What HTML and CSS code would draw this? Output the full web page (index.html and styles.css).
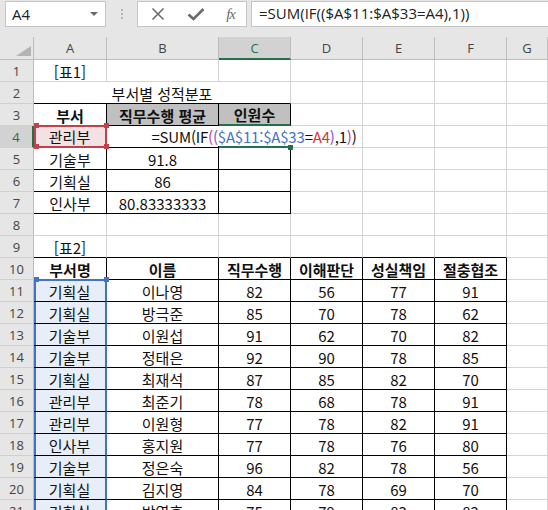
FILE: index.html
```html
<!DOCTYPE html>
<html lang="ko">
<head>
    <meta charset="UTF-8">
    <title>성적분포</title>
    <link rel="stylesheet" href="styles.css">
</head>
<body>

    <!-- 수식 입력줄 -->
    <div class="bar">
        <div class="namebox">
            <span>A4</span>
            <span class="caret"></span>
        </div>
        <div class="grip"><i></i><i></i><i></i></div>
        <div class="fxbox">
            <svg width="14" height="14" viewBox="0 0 14 14"><path d="M1.5 1.5 L12.5 12.5 M12.5 1.5 L1.5 12.5" stroke="#6b6b6b" stroke-width="1.6" fill="none"/></svg>
            <svg width="18" height="14" viewBox="0 0 18 14"><path d="M1.5 7.5 L6.5 12 L16.5 2" stroke="#6b6b6b" stroke-width="2.6" fill="none"/></svg>
            <span class="fx">fx</span>
        </div>
        <div class="formula">=SUM(IF(($A$11:$A$33=A4),1))</div>
    </div>

    <!-- 시트 -->
    <div class="sheet">
        <div class="h corner"><span class="tri"></span></div>
        <div class="h">A</div>
        <div class="h">B</div>
        <div class="h on-col">C</div>
        <div class="h">D</div>
        <div class="h">E</div>
        <div class="h">F</div>
        <div class="h">G</div>

        <div class="r">1</div>
        <div class="c">[표1]</div><div class="c"></div><div class="c"></div><div class="c"></div><div class="c"></div><div class="c"></div><div class="c"></div>

        <div class="r">2</div>
        <div class="c span3 bb">부서별 성적분포</div><div class="c"></div><div class="c"></div><div class="c"></div><div class="c"></div>

        <div class="r">3</div>
        <div class="c bk b red-b">부서</div><div class="c bk b gray">직무수행 평균</div><div class="c bk b gray green-b">인원수</div><div class="c"></div><div class="c"></div><div class="c"></div><div class="c"></div>

        <div class="r on-row">4</div>
        <div class="c bk ref-red">관리부<span class="hd tl"></span><span class="hd tr"></span><span class="hd bl"></span><span class="hd br"></span></div>
        <div class="c bk"></div>
        <div class="c bk active">
            <div class="edit">=SUM(IF<span class="p1">(</span><span class="p2">(</span><span class="blue">$A$11:$A$33</span>=<span class="red">A4</span><span class="p2">)</span>,1<span class="p1">)</span>)</div>
            <span class="hd act"></span>
        </div>
        <div class="c"></div><div class="c"></div><div class="c"></div><div class="c"></div>

        <div class="r">5</div>
        <div class="c bk">기술부</div><div class="c bk">91.8</div><div class="c bk"></div><div class="c"></div><div class="c"></div><div class="c"></div><div class="c"></div>

        <div class="r">6</div>
        <div class="c bk">기획실</div><div class="c bk">86</div><div class="c bk"></div><div class="c"></div><div class="c"></div><div class="c"></div><div class="c"></div>

        <div class="r">7</div>
        <div class="c bk">인사부</div><div class="c bk">80.83333333</div><div class="c bk"></div><div class="c"></div><div class="c"></div><div class="c"></div><div class="c"></div>

        <div class="r">8</div>
        <div class="c"></div><div class="c"></div><div class="c"></div><div class="c"></div><div class="c"></div><div class="c"></div><div class="c"></div>

        <div class="r">9</div>
        <div class="c bb">[표2]</div><div class="c bb"></div><div class="c bb"></div><div class="c bb"></div><div class="c bb"></div><div class="c bb"></div><div class="c"></div>

        <div class="r">10</div>
        <div class="c bk b blue-b">부서명</div><div class="c bk b">이름</div><div class="c bk b">직무수행</div><div class="c bk b">이해판단</div><div class="c bk b">성실책임</div><div class="c bk b">절충협조</div><div class="c"></div>

        <div class="r">11</div>
        <div class="c bk ref-blue top">기획실<span class="hd tl"></span><span class="hd tr"></span></div><div class="c bk">이나영</div><div class="c bk">82</div><div class="c bk">56</div><div class="c bk">77</div><div class="c bk">91</div><div class="c"></div>

        <div class="r">12</div>
        <div class="c bk ref-blue">기획실</div><div class="c bk">방극준</div><div class="c bk">85</div><div class="c bk">70</div><div class="c bk">78</div><div class="c bk">62</div><div class="c"></div>

        <div class="r">13</div>
        <div class="c bk ref-blue">기술부</div><div class="c bk">이원섭</div><div class="c bk">91</div><div class="c bk">62</div><div class="c bk">70</div><div class="c bk">82</div><div class="c"></div>

        <div class="r">14</div>
        <div class="c bk ref-blue">기술부</div><div class="c bk">정태은</div><div class="c bk">92</div><div class="c bk">90</div><div class="c bk">78</div><div class="c bk">85</div><div class="c"></div>

        <div class="r">15</div>
        <div class="c bk ref-blue">기획실</div><div class="c bk">최재석</div><div class="c bk">87</div><div class="c bk">85</div><div class="c bk">82</div><div class="c bk">70</div><div class="c"></div>

        <div class="r">16</div>
        <div class="c bk ref-blue">관리부</div><div class="c bk">최준기</div><div class="c bk">78</div><div class="c bk">68</div><div class="c bk">78</div><div class="c bk">91</div><div class="c"></div>

        <div class="r">17</div>
        <div class="c bk ref-blue">관리부</div><div class="c bk">이원형</div><div class="c bk">77</div><div class="c bk">78</div><div class="c bk">82</div><div class="c bk">91</div><div class="c"></div>

        <div class="r">18</div>
        <div class="c bk ref-blue">인사부</div><div class="c bk">홍지원</div><div class="c bk">77</div><div class="c bk">78</div><div class="c bk">76</div><div class="c bk">80</div><div class="c"></div>

        <div class="r">19</div>
        <div class="c bk ref-blue">기술부</div><div class="c bk">정은숙</div><div class="c bk">96</div><div class="c bk">82</div><div class="c bk">78</div><div class="c bk">56</div><div class="c"></div>

        <div class="r">20</div>
        <div class="c bk ref-blue">기획실</div><div class="c bk">김지영</div><div class="c bk">84</div><div class="c bk">78</div><div class="c bk">69</div><div class="c bk">70</div><div class="c"></div>

        <div class="r">21</div>
        <div class="c bk ref-blue">기획실</div><div class="c bk">박영훈</div><div class="c bk">75</div><div class="c bk">79</div><div class="c bk">83</div><div class="c bk">82</div><div class="c"></div>
    </div>

</body>
</html>
```

FILE: styles.css
```css
body {
    margin: 0;
    padding: 0;
    width: 548px;
    height: 510px;
    overflow: hidden;
    background: #ffffff;
    font-family: "Noto Sans CJK KR", "Noto Sans", sans-serif;
}

/* 수식 입력줄 */
.bar {
    display: flex;
    align-items: flex-start;
    height: 37px;
    box-sizing: border-box;
    padding: 1px 0 0 5px;
    background: #e6e6e6;
}
.namebox {
    width: 101px;
    height: 26px;
    box-sizing: border-box;
    border: 1px solid #c6c6c6;
    background: #fff;
    display: flex;
    align-items: center;
    justify-content: space-between;
    padding: 0 7px 0 6px;
    font: 15px "Open Sans", "Noto Sans", sans-serif;
    color: #222;
}
.caret {
    width: 0;
    height: 0;
    border-left: 4px solid transparent;
    border-right: 4px solid transparent;
    border-top: 4px solid #6b6b6b;
}
.grip {
    width: 31px;
    height: 26px;
    display: flex;
    flex-direction: column;
    align-items: center;
    justify-content: center;
    gap: 2px;
}
.grip i {
    width: 2px;
    height: 2px;
    background: #b4b4b4;
}
.fxbox {
    width: 110px;
    height: 26px;
    box-sizing: border-box;
    border: 1px solid #c6c6c6;
    background: #fff;
    display: flex;
    align-items: center;
    justify-content: space-between;
    padding: 0 11px 0 13px;
}
.fx {
    font: italic 15px "Liberation Serif", serif;
    color: #6b6b6b;
    letter-spacing: -1px;
}
.formula {
    flex: 1;
    margin-left: 4px;
    height: 26px;
    box-sizing: border-box;
    border: 1px solid #c6c6c6;
    border-right: none;
    background: #fff;
    padding-left: 7px;
    font: 15px "Open Sans", "Noto Sans", sans-serif;
    line-height: 23px;
    color: #222;
    white-space: nowrap;
}

/* 시트 격자 */
.sheet {
    display: grid;
    grid-template-columns: 34px 73px 112px 72px 72px 72px 72px 1fr;
    grid-template-rows: 23px;
    grid-auto-rows: 22px;
}
.h, .r {
    background: #e6e6e6;
    color: #444;
    font: 13px "Open Sans", "Noto Sans", sans-serif;
    display: flex;
    align-items: center;
    justify-content: center;
    box-sizing: border-box;
    border-right: 1px solid #bdbdbd;
    border-bottom: 1px solid #bdbdbd;
}
.r {
    font-size: 13px;
    border-bottom-color: #d0d0d0;
}
.corner {
    position: relative;
}
.tri {
    position: absolute;
    right: 2px;
    bottom: 3px;
    width: 0;
    height: 0;
    border-left: 15px solid transparent;
    border-bottom: 10px solid #b4b4b4;
}
.on-col {
    background: #d2d2d2;
    color: #217346;
    border-bottom: 2px solid #217346;
}
.on-row {
    background: #d2d2d2;
    color: #217346;
    border-right: 2px solid #217346;
}

.c {
    box-sizing: border-box;
    border-right: 1px solid #d4d4d4;
    border-bottom: 1px solid #d4d4d4;
    display: flex;
    align-items: center;
    justify-content: center;
    padding-top: 1px;
    font-size: 15px;
    line-height: 1;
    color: #111;
    white-space: nowrap;
    position: relative;
}
.span3 {
    grid-column: span 3;
}
.bk {
    border-right-color: #000;
    border-bottom-color: #000;
}
.bb {
    border-bottom-color: #000;
}
.b {
    font-weight: bold;
}
.gray {
    background: #c0c0c0;
}

/* 참조 범위 표시 */
.red-b {
    border-bottom-color: #c4414c;
}
.ref-red {
    background: #f3e2e3;
    border-right: 2px solid #c4414c;
    border-bottom: 2px solid #c4414c;
    box-shadow: inset 2px 0 #c4414c, inset 0 1px #c4414c;
}
.ref-red .hd {
    background: #c4414c;
}
.blue-b {
    border-bottom-color: #4472c4;
}
.ref-blue {
    background: #e8eef8;
    border-right: 2px solid #4472c4;
    box-shadow: inset 2px 0 #4472c4;
}
.ref-blue.top {
    box-shadow: inset 2px 0 #4472c4, inset 0 1px #4472c4;
}
.ref-blue .hd {
    background: #4472c4;
}
.hd {
    position: absolute;
    width: 5px;
    height: 5px;
    z-index: 3;
}
.tl { left: 0; top: -3px; }
.tr { right: -4px; top: -3px; }
.bl { left: 0; bottom: -3px; }
.br { right: -4px; bottom: -3px; }

/* 편집 중인 셀 */
.green-b {
    border-bottom: 2px solid #217346;
}
.active {
    border-bottom: 2px solid #217346;
}
.edit {
    position: absolute;
    left: -72px;
    right: -71px;
    top: 0;
    bottom: 0;
    background: #fff;
    z-index: 2;
    display: flex;
    align-items: center;
    justify-content: center;
    padding-top: 1px;
    font-family: "Noto Sans CJK KR", sans-serif;
    letter-spacing: -0.2px;
}
.hd.act {
    right: -3px;
    bottom: -4px;
    background: #217346;
}
.p1 { color: #c0399e; }
.p2 { color: #7b52c7; }
.blue { color: #4472c4; }
.red { color: #d7323c; }
```
